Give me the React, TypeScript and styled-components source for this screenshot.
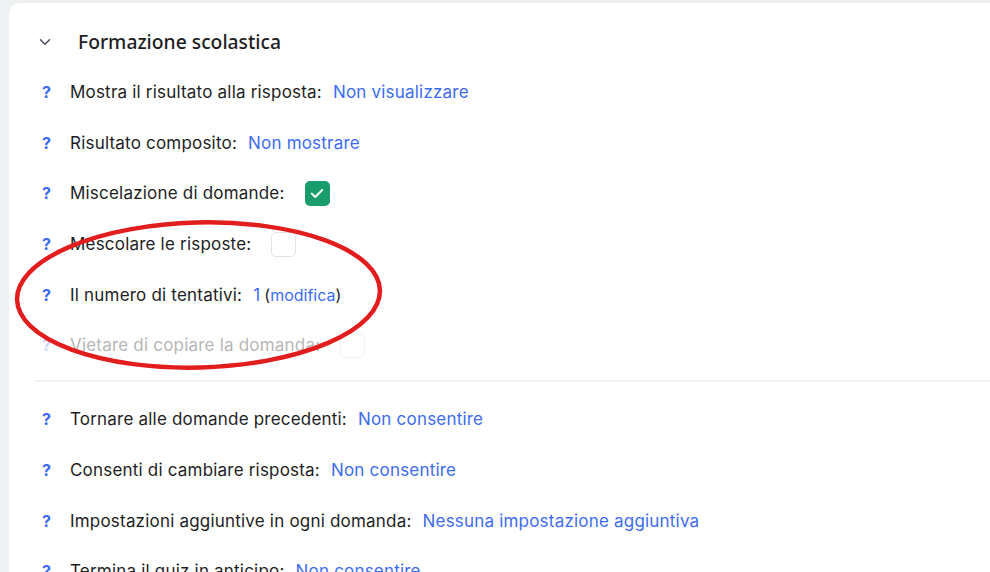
import React from "react";
import styled, { createGlobalStyle } from "styled-components";

const Global = createGlobalStyle`
  html, body { margin: 0; padding: 0; }
  body {
    background: #eef1f2;
    font-family: Inter, "Liberation Sans", sans-serif;
    overflow: hidden;
  }
`;

const Page = styled.div`
  position: relative;
  width: 990px;
  height: 572px;
  padding: 3px 0 0 9px;
  box-sizing: border-box;
  overflow: hidden;
`;

const Card = styled.section`
  background: #ffffff;
  border-radius: 10px 0 0 0;
  min-height: 600px;
  padding-top: 13px;
  box-sizing: border-box;
`;

const Header = styled.div`
  display: flex;
  align-items: center;
  height: 51px;
  padding-left: 30px;
`;

const Chevron = styled.svg`
  width: 12px;
  height: 8px;
  margin-right: 27px;
`;

const Title = styled.h2`
  margin: 0;
  font-family: "Noto Sans", "Open Sans", sans-serif;
  font-size: 19.3px;
  font-weight: 500;
  color: #1d1d1f;
`;

const Row = styled.div<{ $disabled?: boolean }>`
  display: flex;
  align-items: center;
  height: 50.6px;
  padding-left: 33px;
  font-size: 17px;
  letter-spacing: 0.2px;
  color: ${(p) => (p.$disabled ? "#b7b7b7" : "#1e1e1e")};
`;

const Help = styled.span<{ $disabled?: boolean }>`
  width: 28px;
  flex: none;
  font-weight: 700;
  font-size: 16px;
  color: ${(p) => (p.$disabled ? "#c9d6fb" : "#3d6cf0")};
`;

const Label = styled.span`
  white-space: nowrap;
`;

const Value = styled.span`
  color: #3d6cf0;
  margin-left: 11px;
  white-space: nowrap;
`;

const Paren = styled.span`
  color: #1e1e1e;
  margin-left: 4px;
  font-size: 16px;
  letter-spacing: 0;
`;

const Link = styled.span`
  color: #3d6cf0;
`;

const Check = styled.span<{ $checked?: boolean; $disabled?: boolean }>`
  display: inline-flex;
  align-items: center;
  justify-content: center;
  width: 25px;
  height: 25px;
  margin-left: 20px;
  box-sizing: border-box;
  border-radius: 5px;
  background: ${(p) => (p.$checked ? "#1a9d6c" : "#ffffff")};
  border: ${(p) =>
    p.$checked ? "none" : `1px solid ${p.$disabled ? "#f0f0f0" : "#e3e3e3"}`};
`;

const Divider = styled.hr`
  border: none;
  height: 2px;
  background: #f3f3f3;
  margin: 9.5px 0 12px 25px;
`;

const Annotation = styled.svg`
  position: absolute;
  left: 0;
  top: 0;
  width: 990px;
  height: 572px;
  pointer-events: none;
`;

type Item = {
  label: string;
  value?: string;
  check?: "on" | "off";
  attempts?: boolean;
  disabled?: boolean;
};

const top: Item[] = [
  { label: "Mostra il risultato alla risposta:", value: "Non visualizzare" },
  { label: "Risultato composito:", value: "Non mostrare" },
  { label: "Miscelazione di domande:", check: "on" },
  { label: "Mescolare le risposte:", check: "off" },
  { label: "Il numero di tentativi:", attempts: true },
  { label: "Vietare di copiare la domanda:", check: "off", disabled: true },
];

const bottom: Item[] = [
  { label: "Tornare alle domande precedenti:", value: "Non consentire" },
  { label: "Consenti di cambiare risposta:", value: "Non consentire" },
  {
    label: "Impostazioni aggiuntive in ogni domanda:",
    value: "Nessuna impostazione aggiuntiva",
  },
  { label: "Termina il quiz in anticipo:", value: "Non consentire" },
];

const SettingRow = ({ item }: { item: Item }) => (
  <Row $disabled={item.disabled}>
    <Help $disabled={item.disabled}>?</Help>
    <Label>{item.label}</Label>
    {item.value && <Value>{item.value}</Value>}
    {item.attempts && (
      <>
        <Value>1</Value>
        <Paren>
          (<Link>modifica</Link>)
        </Paren>
      </>
    )}
    {item.check && (
      <Check $checked={item.check === "on"} $disabled={item.disabled}>
        {item.check === "on" && (
          <svg width="14" height="11" viewBox="0 0 14 11">
            <path
              d="M1.8 5.6 L5.3 9 L12.2 2"
              fill="none"
              stroke="#fff"
              strokeWidth="2"
              strokeLinecap="round"
              strokeLinejoin="round"
            />
          </svg>
        )}
      </Check>
    )}
  </Row>
);

export default function App() {
  return (
    <>
      <Global />
      <Page>
        <Card>
          <Header>
            <Chevron viewBox="0 0 12 8">
              <path
                d="M1.5 1.8 L6 6.2 L10.5 1.8"
                fill="none"
                stroke="#4a5060"
                strokeWidth="1.5"
                strokeLinecap="round"
                strokeLinejoin="round"
              />
            </Chevron>
            <Title>Formazione scolastica</Title>
          </Header>
          {top.map((it) => (
            <SettingRow key={it.label} item={it} />
          ))}
          <Divider />
          {bottom.map((it) => (
            <SettingRow key={it.label} item={it} />
          ))}
        </Card>
        <Annotation viewBox="0 0 990 572">
          <ellipse
            cx="198.5"
            cy="295"
            rx="181.5"
            ry="72.5"
            fill="none"
            stroke="#e11d1d"
            strokeWidth="4.5"
            transform="rotate(-1.5 198.5 295)"
          />
        </Annotation>
      </Page>
    </>
  );
}
